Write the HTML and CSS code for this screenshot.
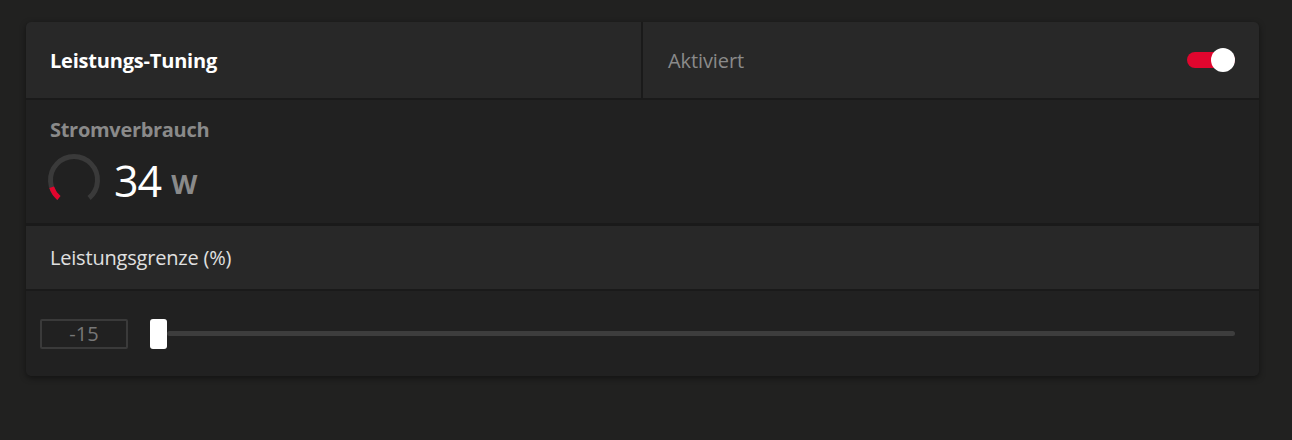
FILE: index.html
```html
<!DOCTYPE html>
<html lang="de">
<head>
<meta charset="utf-8">
<title>Leistungs-Tuning</title>
<link rel="stylesheet" href="styles.css">
</head>
<body>
<div class="card">
  <div class="header">
    <div class="cell title-cell"><span class="title">Leistungs-Tuning</span></div>
    <div class="cell status-cell">
      <span class="status">Aktiviert</span>
      <span class="toggle"><span class="knob"></span></span>
    </div>
  </div>
  <div class="power">
    <div class="power-label">Stromverbrauch</div>
    <div class="power-value">
      <svg class="gauge" width="56" height="56" viewBox="0 0 56 56">
        <path d="M 12.9 46.0 A 23.5 23.5 0 1 1 43.1 46.0" fill="none" stroke="#3a3a3a" stroke-width="5"/>
        <path d="M 12.9 46.0 A 23.5 23.5 0 0 1 5.65 35.26" fill="none" stroke="#e2052d" stroke-width="5"/>
      </svg>
      <span class="num">34</span>
      <span class="unit">W</span>
    </div>
  </div>
  <div class="limit-row">Leistungsgrenze (%)</div>
  <div class="slider-row">
    <div class="value-box">-15</div>
    <div class="slider">
      <span class="thumb"></span>
      <span class="track"></span>
    </div>
  </div>
</div>
</body>
</html>
```
FILE: styles.css
```css
* { box-sizing: border-box; }
html, body { margin: 0; padding: 0; }
body {
  background: #212120;
  font-family: "Open Sans", "Noto Sans", sans-serif;
  padding: 22px 33px 0 26px;
  height: 440px;
}
.card {
  width: 1233px;
  background: #1a1a1a;
  border-radius: 5px;
  overflow: hidden;
  box-shadow: 0 2px 6px rgba(0,0,0,0.45);
  display: flex;
  flex-direction: column;
}
.header {
  display: grid;
  grid-template-columns: 615px 1fr;
  column-gap: 2px;
  height: 76px;
}
.cell {
  background: #282828;
  display: flex;
  align-items: center;
}
.title-cell { padding-left: 24px; }
.title {
  color: #ffffff;
  font-weight: 700;
  font-size: 20px;
  letter-spacing: -0.2px;
}
.status-cell {
  padding-left: 25px;
  padding-right: 24px;
  justify-content: space-between;
}
.status {
  color: #8a8a8a;
  font-size: 20px;
  letter-spacing: -0.1px;
}
.toggle {
  position: relative;
  width: 48px;
  height: 16px;
  background: #e0062e;
  border-radius: 8px;
}
.knob {
  position: absolute;
  right: 0;
  top: -4px;
  width: 24px;
  height: 24px;
  border-radius: 50%;
  background: #ffffff;
}
.power {
  margin-top: 2px;
  background: #212121;
  height: 123px;
  padding: 17px 24px 0 24px;
}
.power-label {
  color: #8a8a8a;
  font-weight: 700;
  font-size: 20px;
  line-height: 26px;
  letter-spacing: -0.3px;
}
.power-value {
  display: flex;
  align-items: center;
  margin-top: 9px;
  margin-left: -4px;
  height: 56px;
}
.gauge { display: block; flex: none; }
.num {
  color: #ffffff;
  font-size: 43px;
  font-weight: 400;
  letter-spacing: -1px;
  margin-left: 12px;
  line-height: 54px;
  margin-top: 2px;
}
.unit {
  color: #8a8a8a;
  font-size: 27px;
  font-weight: 700;
  margin-left: 10px;
  margin-top: 6px;
}
.limit-row {
  margin-top: 3px;
  background: #282828;
  height: 63px;
  display: flex;
  align-items: center;
  padding-left: 24px;
  color: #e0e0e0;
  font-size: 20px;
  letter-spacing: -0.2px;
}
.slider-row {
  margin-top: 2px;
  background: #212121;
  height: 85px;
  display: flex;
  align-items: center;
  padding: 0 24px 0 14px;
}
.value-box {
  width: 88px;
  height: 30px;
  border: 2px solid #3a3a3a;
  color: #777777;
  font-size: 20px;
  display: flex;
  align-items: center;
  justify-content: center;
  border-radius: 2px;
}
.slider {
  flex: 1;
  margin-left: 22px;
  display: flex;
  align-items: center;
}
.thumb {
  width: 17px;
  height: 30px;
  background: #ffffff;
  border-radius: 3px;
  flex: none;
}
.track {
  flex: 1;
  height: 5px;
  background: #3d3d3d;
  border-radius: 3px;
}
```
